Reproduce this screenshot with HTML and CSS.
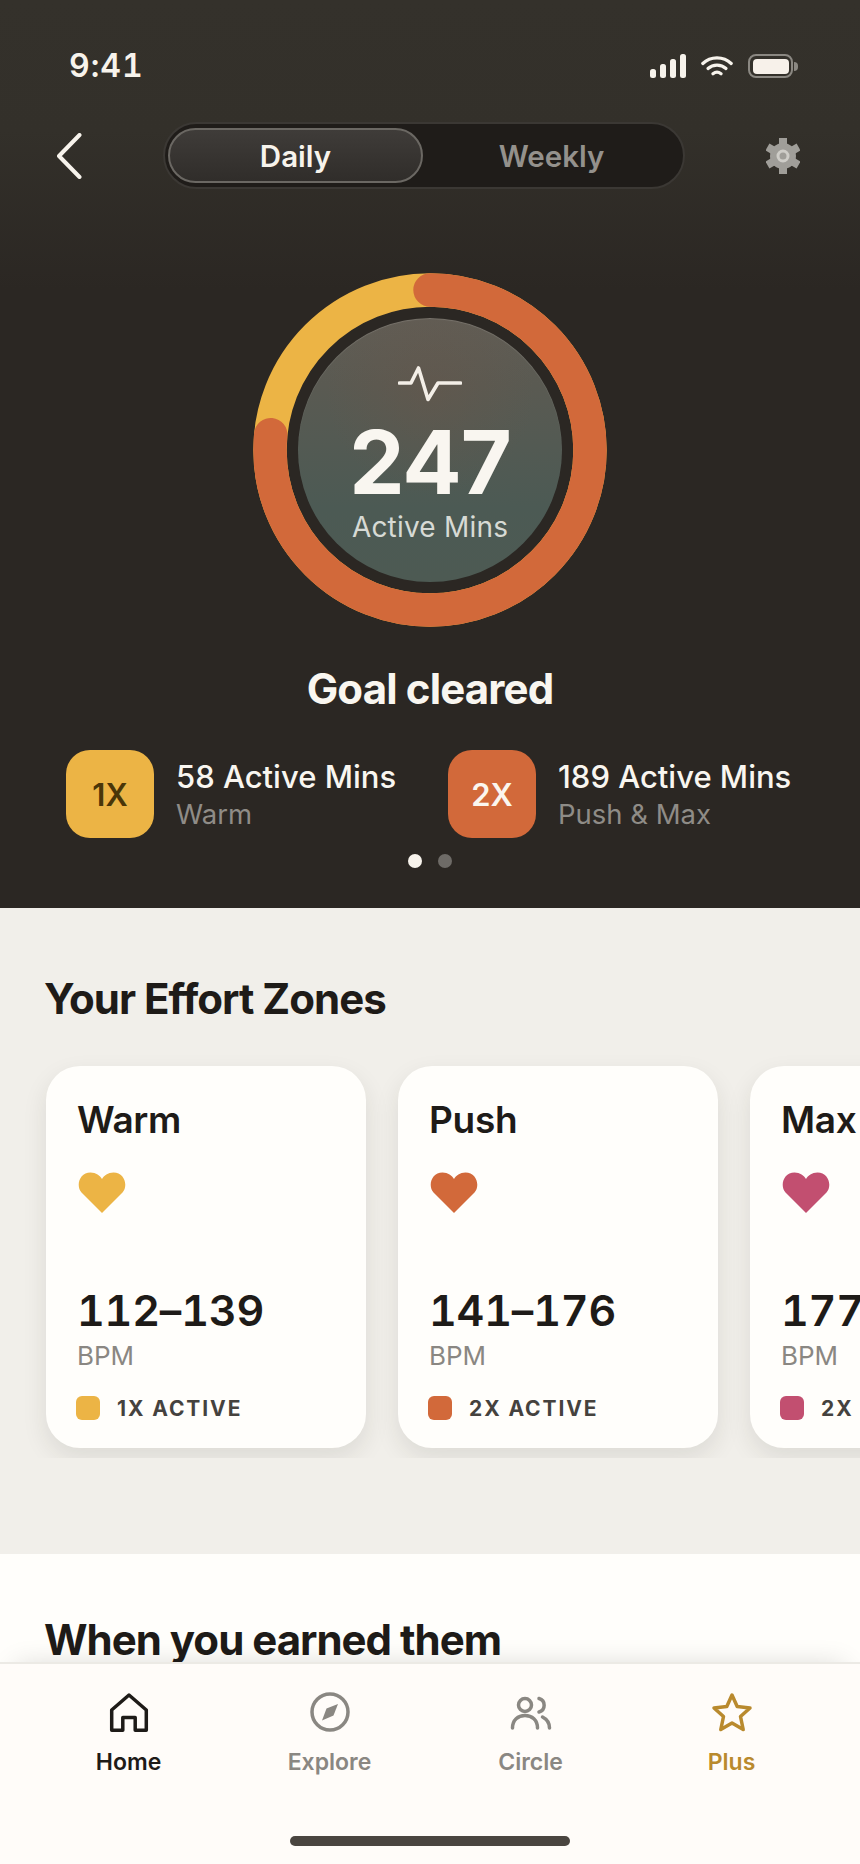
FILE: index.html
```html
<!DOCTYPE html>
<html lang="en">
<head>
<meta charset="utf-8">
<title>Active Mins</title>
<link rel="stylesheet" href="styles.css">
</head>
<body>
<div class="app">
  <section class="hero">
    <div class="status">
      <span class="time">9:41</span>
      <div class="status-icons">
        <svg class="sig" width="36" height="24" viewBox="0 0 36 24"><rect x="0" y="15" width="6" height="9" rx="2.5"/><rect x="10" y="10" width="6" height="14" rx="2.5"/><rect x="20" y="5" width="6" height="19" rx="2.5"/><rect x="30" y="0" width="6" height="24" rx="2.5"/></svg>
        <svg class="wifi" width="32" height="20" viewBox="0 0 32 20"><path d="M1.8 7.5C9.5 0 22.500 0 30.200 7.500"/><path d="M7 12.500C12 8 20 8 25 12.500"/><path d="M12 17.800C14.500 15.800 17.500 15.800 20 17.800"/></svg>
        <div class="battery"><span class="batt-shell"><span class="batt-fill"></span></span><span class="batt-nub"></span></div>
      </div>
    </div>
    <div class="topnav">
      <svg class="back" width="26" height="46" viewBox="0 0 26 46"><path d="M23.500 2L3 23L23.500 44"/></svg>
      <div class="seg">
        <span class="seg-item seg-on">Daily</span>
        <span class="seg-item">Weekly</span>
      </div>
      <svg class="gear" width="34" height="36" viewBox="0 0 34 36">
        <circle cx="17" cy="18" r="13"/>
        <rect x="13" y="0" width="8" height="8"/>
        <rect x="13" y="0" width="8" height="8" transform="rotate(60 17 18)"/>
        <rect x="13" y="0" width="8" height="8" transform="rotate(120 17 18)"/>
        <rect x="13" y="0" width="8" height="8" transform="rotate(180 17 18)"/>
        <rect x="13" y="0" width="8" height="8" transform="rotate(240 17 18)"/>
        <rect x="13" y="0" width="8" height="8" transform="rotate(300 17 18)"/>
        <circle class="gear-ring" cx="17" cy="18" r="5"/>
      </svg>
    </div>
    <div class="ring">
      <svg class="ring-svg" width="354" height="354" viewBox="0 0 354 354">
        <circle class="arc-warm" cx="177" cy="177" r="160"/>
        <circle class="arc-push" cx="177" cy="177" r="160" stroke-dasharray="769 1005" transform="rotate(-90 177 177)"/>
      </svg>
      <div class="disk">
        <svg class="pulse" width="64" height="36" viewBox="0 0 64 36"><path d="M1.500 17H13L20.500 2L30 33.500L40 17H62.500"/></svg>
        <div class="big">247</div>
        <div class="big-label">Active Mins</div>
      </div>
    </div>
    <h1 class="goal">Goal cleared</h1>
    <div class="stats">
      <div class="stat">
        <div class="badge badge-warm">1X</div>
        <div><div class="stat-main">58 Active Mins</div><div class="stat-sub">Warm</div></div>
      </div>
      <div class="stat">
        <div class="badge badge-push">2X</div>
        <div><div class="stat-main">189 Active Mins</div><div class="stat-sub">Push &amp; Max</div></div>
      </div>
    </div>
    <div class="dots"><span class="dot dot-on"></span><span class="dot"></span></div>
  </section>

  <section class="zones">
    <h2 class="heading">Your Effort Zones</h2>
    <div class="scroller">
      <article class="card">
        <div class="card-title">Warm</div>
        <svg class="heart warm" width="48" height="42" viewBox="0 0 48 42"><path d="M24 41L3.500 20.500C-2.500 13.500 1.500 .5 12.500 .5C18 .5 22 3.500 24 7C26 3.500 30 .5 35.500 .5C46.500 .5 50.500 13.500 44.500 20.500Z"/></svg>
        <div class="range">112–139</div>
        <div class="bpm">BPM</div>
        <div class="tag"><span class="sq sq-warm"></span><span class="tag-text">1X ACTIVE</span></div>
      </article>
      <article class="card">
        <div class="card-title">Push</div>
        <svg class="heart push" width="48" height="42" viewBox="0 0 48 42"><path d="M24 41L3.500 20.500C-2.500 13.500 1.500 .5 12.500 .5C18 .5 22 3.500 24 7C26 3.500 30 .5 35.500 .5C46.500 .5 50.500 13.500 44.500 20.500Z"/></svg>
        <div class="range">141–176</div>
        <div class="bpm">BPM</div>
        <div class="tag"><span class="sq sq-push"></span><span class="tag-text">2X ACTIVE</span></div>
      </article>
      <article class="card">
        <div class="card-title">Max</div>
        <svg class="heart max" width="48" height="42" viewBox="0 0 48 42"><path d="M24 41L3.500 20.500C-2.500 13.500 1.500 .5 12.500 .5C18 .5 22 3.500 24 7C26 3.500 30 .5 35.500 .5C46.500 .5 50.500 13.500 44.500 20.500Z"/></svg>
        <div class="range">177</div>
        <div class="bpm">BPM</div>
        <div class="tag"><span class="sq sq-max"></span><span class="tag-text">2X</span></div>
      </article>
    </div>
  </section>

  <section class="earned">
    <h2 class="heading">When you earned them</h2>
  </section>

  <nav class="tabbar">
    <div class="tabs">
      <div class="tab tab-home">
        <svg class="ico" width="44" height="44" viewBox="0 0 44 44"><path d="M22 5L39.300 20V40.200H28.200V27.500H15.800V40.200H4.700V20Z"/></svg>
        <span>Home</span>
      </div>
      <div class="tab tab-grey">
        <svg class="ico" width="44" height="44" viewBox="0 0 44 44"><circle cx="22" cy="22" r="18"/><path class="needle" d="M30 14L25.500 25.500L14 30.500L18.500 18.500Z"/></svg>
        <span>Explore</span>
      </div>
      <div class="tab tab-grey">
        <svg class="ico" width="44" height="44" viewBox="0 0 44 44"><circle cx="16" cy="15" r="6.500"/><path d="M3.500 38C3.500 30 9 25.500 16 25.500S28.500 30 28.500 38"/><path d="M30 8.500A7 7 0 0 1 30 22"/><path d="M33.500 27C37.500 29 40.500 33 40.500 38"/></svg>
        <span>Circle</span>
      </div>
      <div class="tab tab-plus">
        <svg class="ico" width="44" height="44" viewBox="0 0 44 44"><path d="M22 5L27.200 16.500L40 18L30.500 26.500L33.200 39.500L22 33L10.800 39.500L13.500 26.500L4 18L16.800 16.500Z"/></svg>
        <span>Plus</span>
      </div>
    </div>
    <div class="home-bar"></div>
  </nav>
</div>
</body>
</html>
```

FILE: styles.css
```css
* { box-sizing: border-box; }
html, body { margin: 0; padding: 0; }
body { font-family: Inter, "Liberation Sans", sans-serif; background: #fffdfa; }
h1, h2 { margin: 0; }

.app { position: relative; width: 860px; height: 1864px; overflow: hidden; }

/* hero */
.hero {
  height: 908px;
  padding-top: 50px;
  color: #f7f3ec;
  background: linear-gradient(#34312b 0, #33302a 130px, #2b2723 290px);
}
.status { display: flex; justify-content: space-between; align-items: center; height: 32px; padding: 0 62px 0 69px; }
.time { font-size: 32px; font-weight: 600; line-height: 32px; letter-spacing: 1px; font-feature-settings: "tnum"; }
.status-icons { display: flex; align-items: center; gap: 15px; }
.sig { fill: #f7f3ec; display: block; }
.wifi { display: block; fill: none; stroke: #f7f3ec; stroke-width: 3.2; stroke-linecap: round; }
.battery { display: flex; align-items: center; gap: 1px; }
.batt-shell { display: block; width: 45px; height: 24px; border: 2.500px solid #8b8882; border-radius: 8px; padding: 2.500px; }
.batt-fill { display: block; height: 100%; background: #f7f1ea; border-radius: 4px; }
.batt-nub { display: block; width: 4px; height: 9px; background: #8b8882; border-radius: 0 4px 4px 0; }

.topnav { display: flex; align-items: center; justify-content: space-between; margin-top: 40px; padding: 0 60px 0 56px; height: 67px; }
.back { display: block; fill: none; stroke: #f7f3ec; stroke-width: 4; stroke-linecap: round; stroke-linejoin: round; }
.seg { display: flex; width: 522px; height: 67px; padding: 4px 3px; background: #1f1c19; border: 2px solid #3b3834; border-radius: 34px; }
.seg-item { flex: 1; display: flex; align-items: center; justify-content: center; font-size: 29.500px; font-weight: 600; color: #94918c; border-radius: 28px; }
.seg-on { flex: none; width: 255px; color: #f7f3ec; background: linear-gradient(#3f3c39, #302d2a); border: 2px solid #6b6863; }
.gear { display: block; fill: #a09e99; }
.gear-ring { fill: #a09e99; stroke: #cfcdc8; stroke-width: 3; }

/* ring */
.ring { position: relative; width: 354px; height: 354px; margin: 84px auto 0; display: flex; align-items: center; justify-content: center; }
.ring-svg { position: absolute; left: 0; top: 0; display: block; }
.arc-warm { fill: none; stroke: #ecb445; stroke-width: 33.400; }
.arc-push { fill: none; stroke: #d2693a; stroke-width: 33.400; stroke-linecap: round; }
.disk {
  position: relative;
  width: 264px;
  height: 264px;
  border-radius: 50%;
  display: flex;
  flex-direction: column;
  align-items: center;
  padding-top: 48px;
  background:
    radial-gradient(circle at 50% 28%, rgba(105,85,72,.4), rgba(105,85,72,0) 45%),
    linear-gradient(#615d55 0, #5a5a52 25%, #4c5a54 72%, #4d5a53 100%);
  box-shadow: inset 0 1px 1px rgba(255,255,255,.14);
}
.pulse { display: block; fill: none; stroke: #f3eee7; stroke-width: 3.600; stroke-linecap: round; stroke-linejoin: round; }
.big { margin-top: 23px; font-size: 88px; line-height: 74px; font-weight: 700; letter-spacing: -1px; color: #f9f6f0; }
.big-label { margin-top: 11px; font-size: 28px; line-height: 34px; font-weight: 400; letter-spacing: .2px; color: #d7dad5; }

.goal { margin-top: 38px; text-align: center; font-size: 42px; line-height: 48px; font-weight: 700; letter-spacing: -.85px; color: #f9f6f0; }

.stats { display: grid; grid-template-columns: 382px 1fr; margin-top: 37px; padding-left: 66px; }
.stat { display: flex; align-items: center; gap: 22px; }
.badge { width: 88px; height: 88px; border-radius: 24px; display: flex; align-items: center; justify-content: center; font-size: 31px; font-weight: 600; }
.badge-warm { background: #ecb445; color: #4a3608; }
.badge-push { background: #d2693a; color: #fbf6ef; }
.stat-main { margin-top: 1px; font-size: 31px; line-height: 38px; font-weight: 550; color: #f9f6f0; }
.stat-sub { margin-top: 1px; font-size: 27.500px; line-height: 34px; font-weight: 400; color: #8f8c87; }

.dots { display: flex; justify-content: center; gap: 16px; margin-top: 16px; }
.dot { width: 14px; height: 14px; border-radius: 50%; background: #6e6b67; }
.dot-on { background: #f7f3ec; }

/* zones */
.zones { height: 646px; padding-top: 67px; background: #f1efea; }
.heading { padding-left: 44px; font-size: 42px; line-height: 48px; font-weight: 700; letter-spacing: -1px; color: #1e1b18; }
.scroller { display: flex; gap: 32px; margin-top: 27px; padding: 16px 0 10px 46px; overflow: hidden; }
.card {
  flex: none;
  width: 320px;
  height: 382px;
  padding: 32px 0 0 31px;
  background: #fffefb;
  border-radius: 34px;
  box-shadow: 0 10px 24px rgba(40,35,25,.1);
}
.card-title { font-size: 37px; line-height: 44px; font-weight: 600; letter-spacing: -.3px; color: #1e1b18; }
.heart { display: block; margin-top: 30px; margin-left: 1px; }
.warm { fill: #ecb445; }
.push { fill: #d2693a; }
.max { fill: #c24f70; }
.range { margin-top: 71px; font-size: 43px; line-height: 50px; font-weight: 600; letter-spacing: -.2px; font-feature-settings: "tnum"; color: #1e1b18; white-space: nowrap; }
.bpm { margin-top: 6px; font-size: 26px; line-height: 30px; font-weight: 400; color: #8a8782; }
.tag { display: flex; align-items: center; gap: 17px; margin-top: 25px; margin-left: -1px; height: 24px; }
.sq { flex: none; width: 24px; height: 24px; border-radius: 6px; }
.sq-warm { background: #ecb445; }
.sq-push { background: #d2693a; }
.sq-max { background: #c24f70; }
.tag-text { font-size: 21px; font-weight: 700; letter-spacing: 1.900px; color: #45423e; white-space: nowrap; }

/* earned */
.earned { height: 310px; padding-top: 62px; background: #fffefb; }

/* tab bar */
.tabbar {
  position: absolute;
  left: 0;
  right: 0;
  bottom: 0;
  height: 202px;
  display: flex;
  flex-direction: column;
  background: #fffcf9;
  border-top: 2px solid #eceae5;
  box-shadow: 0 -12px 26px -16px rgba(0,0,0,.16);
}
.tabs { display: grid; grid-template-columns: repeat(4, 1fr); padding: 26px 28px 0; }
.tab { display: flex; flex-direction: column; align-items: center; gap: 14px; font-size: 23px; line-height: 28px; font-weight: 600; }
.ico { display: block; fill: none; stroke: currentColor; stroke-width: 3.500; stroke-linejoin: round; stroke-linecap: round; }
.tab-home { color: #1e1b18; }
.tab-grey { color: #8a8782; }
.tab-plus { color: #b98a2e; }
.needle { fill: currentColor; stroke: none; }
.home-bar { width: 280px; height: 10px; margin: auto auto 18px; border-radius: 5px; background: #4a4540; }
```
